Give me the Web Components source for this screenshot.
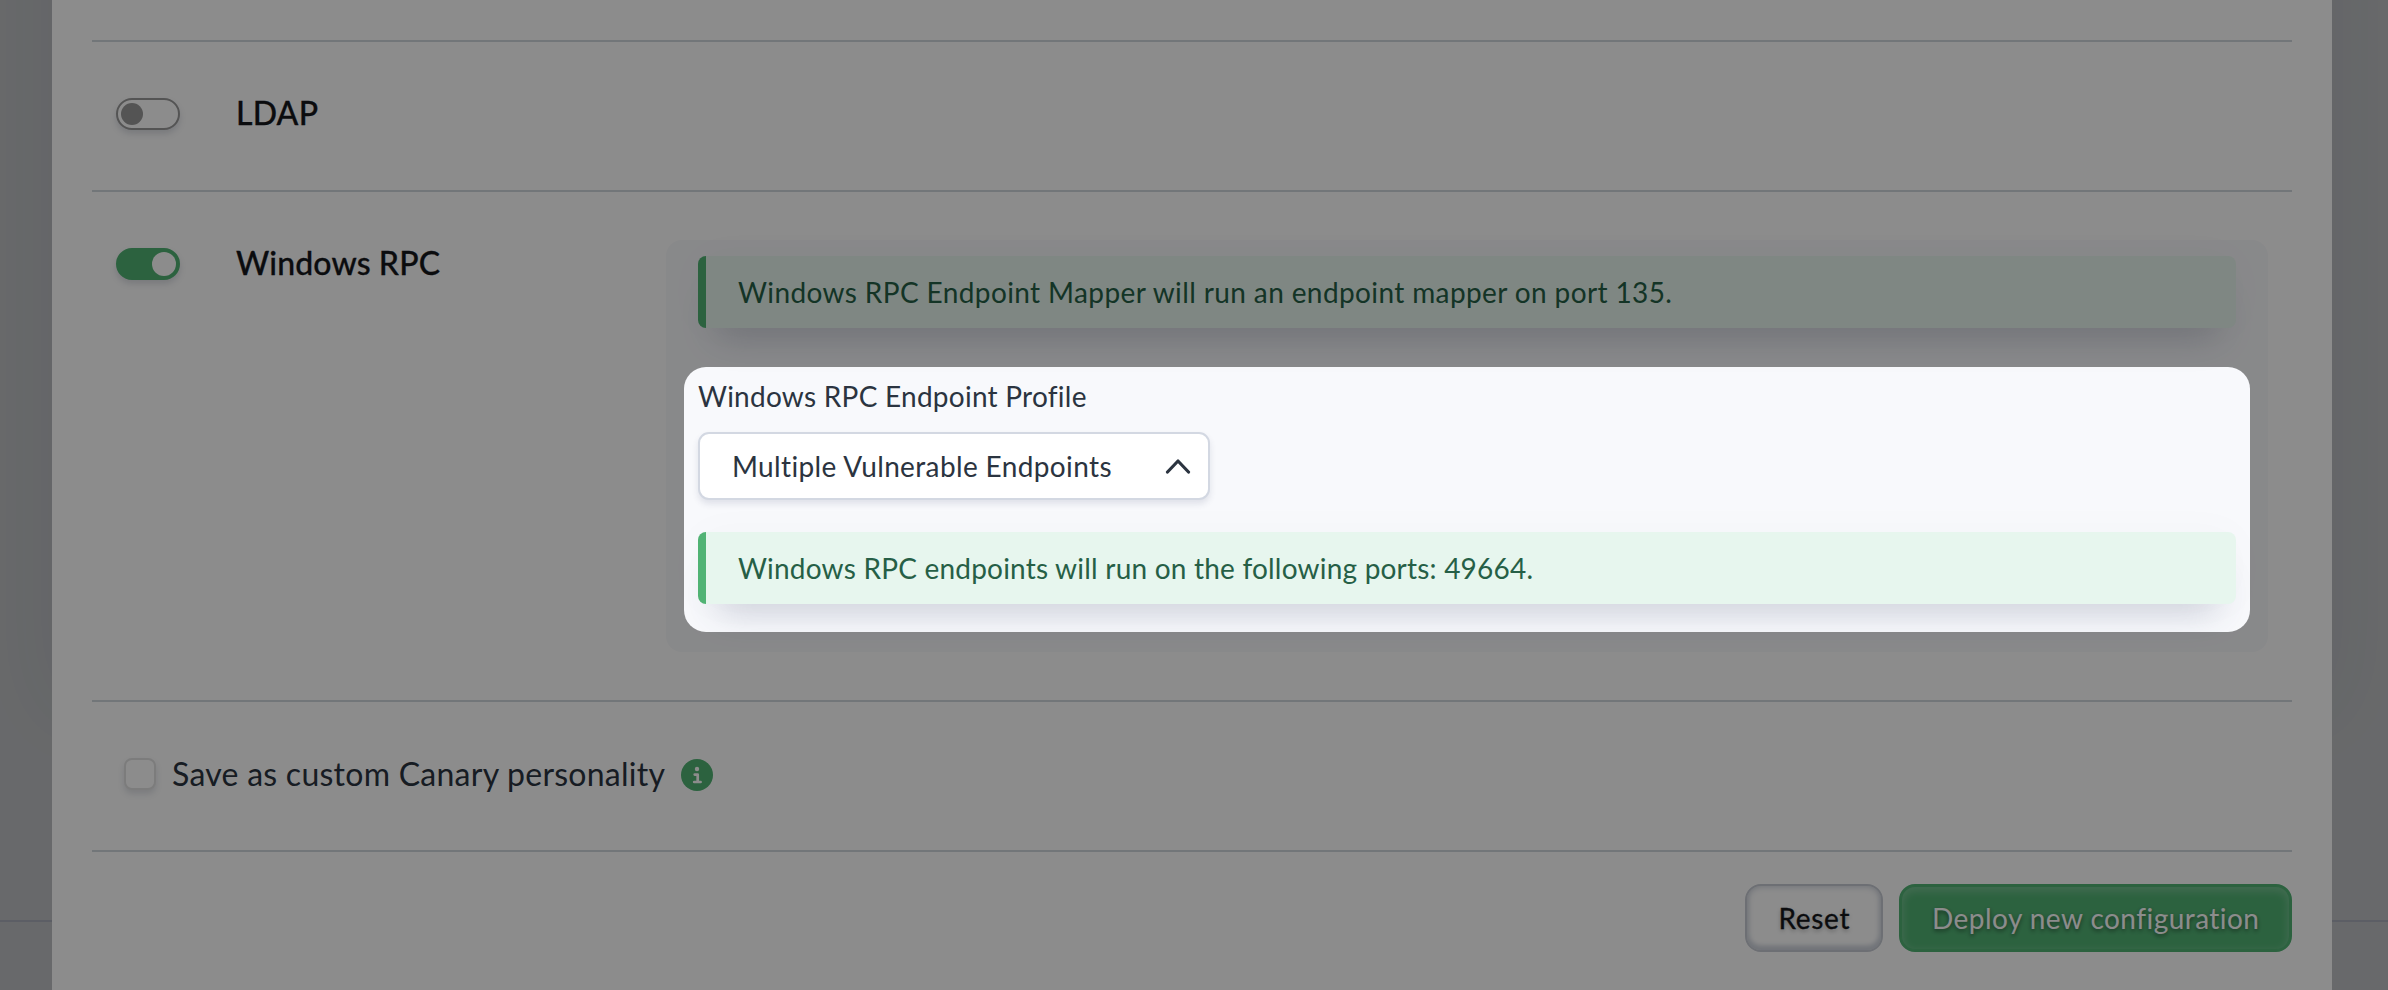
<!DOCTYPE html>
<html lang="en">
<head>
<meta charset="utf-8">
<title>Canary configuration</title>
<style>
  body {
    margin: 0;
    height: 990px;
    overflow: hidden;
    font-family: Lato, "Open Sans", sans-serif;
    color: #2b3440;
  }
</style>
</head>
<body>
<config-page>
  <service-row label="LDAP"></service-row>
  <service-row label="Windows RPC" width="204" on>
    <settings-box>
      <info-alert><fit-text width="934">Windows RPC Endpoint Mapper will run an endpoint mapper on port 135.</fit-text></info-alert>
      <profile-select label="Windows RPC Endpoint Profile" value="Multiple Vulnerable Endpoints"></profile-select>
      <info-alert><fit-text width="795">Windows RPC endpoints will run on the following ports: 49664.</fit-text></info-alert>
    </settings-box>
  </service-row>
  <save-row><fit-text width="493">Save as custom Canary personality</fit-text></save-row>
  <action-bar>
    <action-button><fit-text width="71">Reset</fit-text></action-button>
    <action-button primary><fit-text width="327">Deploy new configuration</fit-text></action-button>
  </action-bar>
</config-page>

<script>
class BaseElement extends HTMLElement {
  render(html) {
    this.attachShadow({mode: 'open'});
    const template = document.createElement('template');
    template.innerHTML = html;
    this.shadowRoot.appendChild(template.content.cloneNode(true));
  }
}

class ToggleSwitch extends BaseElement {
  constructor() {
    super();
    this.render(`
      <style>
        :host {
          display: flex;
          align-items: center;
          box-sizing: border-box;
          width: 64px;
          height: 32px;
          padding: 0 3px;
          border: 2px solid #9a9a9a;
          border-radius: 16px;
          background: #fff;
          box-shadow: 0 4px 6px rgba(50, 60, 90, .17);
        }
        i { width: 22px; height: 22px; border-radius: 50%; background: #9a9a9a; }
        :host([on]) {
          justify-content: flex-end;
          padding: 0 2px;
          border-color: #51b374;
          background: #51b374;
        }
        :host([on]) i { width: 24px; height: 24px; background: #fff; }
      </style>
      <i></i>
    `);
  }
}

class ServiceRow extends BaseElement {
  connectedCallback() {
    this.render(`
      <style>
        :host {
          display: grid;
          grid-template-columns: 120px 430px 1602px;
          align-items: start;
          box-sizing: border-box;
          min-height: 150px;
          padding: 48px 24px;
          border-top: 2px solid #cfd7dd;
        }
        toggle-switch { margin-top: 8px; }
        .name {
          font-size: 32px;
          line-height: 46px;
          font-weight: 500;
          color: #14161b;
          -webkit-text-stroke: .3px #14161b;
        }
      </style>
      <toggle-switch ${this.hasAttribute('on') ? 'on' : ''}></toggle-switch>
      <div class="name"><fit-text width="${this.getAttribute('width') || 82}">${this.getAttribute('label')}</fit-text></div>
      <slot></slot>
    `);
  }
}

class SettingsBox extends BaseElement {
  constructor() {
    super();
    this.render(`
      <style>
        :host {
          display: block;
          box-sizing: border-box;
          height: 412px;
          padding: 16px 32px;
          border-radius: 16px;
          background: #f8f9fc;
        }
      </style>
      <slot></slot>
    `);
  }
}

class InfoAlert extends BaseElement {
  constructor() {
    super();
    this.render(`
      <style>
        :host {
          display: block;
          box-sizing: border-box;
          height: 72px;
          padding-left: 32px;
          border-left: 8px solid #51b374;
          border-radius: 8px;
          background: #e7f6ee;
          color: #265f46;
          font-size: 28px;
          line-height: 72px;
          box-shadow: 0 26px 36px -20px rgba(50, 60, 100, .26), 0 0 44px rgba(50, 60, 100, .025);
        }
      </style>
      <slot></slot>
    `);
  }
}

class ProfileSelect extends BaseElement {
  connectedCallback() {
    this.render(`
      <style>
        :host {
          display: flex;
          flex-direction: column;
          align-items: flex-start;
          box-sizing: border-box;
          height: 204px;
          padding-top: 48px;
          font-size: 28px;
        }
        label { line-height: 40px; margin-bottom: 16px; }
        .select {
          display: flex;
          align-items: center;
          justify-content: space-between;
          box-sizing: border-box;
          width: 512px;
          height: 68px;
          padding: 0 17px 0 32px;
          border: 2px solid #d3d8e2;
          border-radius: 11px;
          background: #fff;
          box-shadow: 0 4px 6px rgba(50, 60, 100, .12);
        }
        svg { display: block; width: 26px; height: 16px; }
      </style>
      <label><fit-text width="388">${this.getAttribute('label')}</fit-text></label>
      <div class="select">
        <fit-text width="380">${this.getAttribute('value')}</fit-text>
        <svg viewBox="0 0 26 16" fill="none" stroke="#2b3440" stroke-width="3.2" stroke-linecap="round" stroke-linejoin="round"><path d="M2.5 14 13 3l10.5 11"/></svg>
      </div>
    `);
  }
}

class SaveRow extends BaseElement {
  constructor() {
    super();
    this.render(`
      <style>
        :host {
          display: flex;
          align-items: center;
          box-sizing: border-box;
          height: 150px;
          padding: 0 32px 4px;
          border-top: 2px solid #cfd7dd;
          font-size: 32px;
        }
        .check {
          box-sizing: border-box;
          width: 32px;
          height: 32px;
          margin-right: 16px;
          border: 2px solid #e2e2e2;
          border-radius: 8px;
          background: #fff;
          box-shadow: 0 4px 6px rgba(50, 60, 90, .15);
        }
        ::slotted(fit-text) { margin-bottom: 2px; }
        svg { width: 32px; height: 32px; margin: 2px 0 0 16px; }
      </style>
      <div class="check"></div>
      <slot></slot>
      <svg viewBox="0 0 32 32"><circle cx="16" cy="16" r="16" fill="#51b374"/><circle cx="16" cy="10" r="2.2" fill="#fff"/><path d="M13.7 15.6h3v7M13.2 23h6.4" fill="none" stroke="#fff" stroke-width="2.7" stroke-linecap="round" stroke-linejoin="round"/></svg>
    `);
  }
}

class ActionBar extends BaseElement {
  constructor() {
    super();
    this.render(`
      <style>
        :host {
          display: flex;
          justify-content: flex-end;
          gap: 16px;
          padding-top: 32px;
          border-top: 2px solid #cfd7dd;
        }
      </style>
      <slot></slot>
    `);
  }
}

class ActionButton extends BaseElement {
  constructor() {
    super();
    this.render(`
      <style>
        :host {
          display: flex;
          align-items: center;
          justify-content: center;
          box-sizing: border-box;
          width: 138px;
          height: 68px;
          border: 2px solid #c6cbd3;
          border-radius: 16px;
          background: #fff;
          color: #14161b;
          font-size: 28px;
          text-shadow: 0 2px 4px rgba(0, 0, 0, .3);
          -webkit-text-stroke: .3px currentColor;
          box-shadow: inset 0 -4px 5px #ced3dc, inset 0 0 6px 1px #ced3dc;
        }
        :host([primary]) {
          width: 393px;
          border-color: #51b374;
          background: #51b374;
          color: #fff;
          text-shadow: 0 2px 4px rgba(0, 0, 0, .5);
          box-shadow: inset 0 0 0 1px #51b374, inset 0 3px 7px 3px rgba(255, 255, 255, .2);
          -webkit-text-stroke: 0;
        }
      </style>
      <slot></slot>
    `);
  }
}

class ConfigPage extends BaseElement {
  constructor() {
    super();
    this.render(`
      <style>
        :host {
          display: block;
          position: relative;
          box-sizing: border-box;
          height: 990px;
          padding: 0 56px 0 52px;
          overflow: hidden;
          background: linear-gradient(#bec0c3 920px, #a8abb9 920px, #a8abb9 922px, #bec0c3 922px);
        }
        main {
          box-sizing: border-box;
          height: 990px;
          padding: 40px 40px 0;
          background: #fff;
          box-shadow: 0 -280px 80px rgba(40, 40, 60, .06);
        }
        /* everything but the highlighted area is dimmed */
        .spotlight {
          position: absolute;
          left: 684px;
          top: 367px;
          width: 1565.5px;
          height: 264.5px;
          border-radius: 22px;
          box-shadow: 0 0 0 2400px rgba(0, 0, 0, .45);
        }
      </style>
      <main><slot></slot></main>
      <div class="spotlight"></div>
    `);
  }
}

// Single line of text tracked out to the given width
class FitText extends BaseElement {
  constructor() {
    super();
    this.render(`
      <style>
        :host { display: inline-block; white-space: nowrap; }
        span { display: inline-block; }
      </style>
      <span><slot></slot></span>
    `);
  }

  connectedCallback() {
    const width = parseFloat(this.getAttribute('width'));
    if (!width) return;
    const span = this.shadowRoot.querySelector('span');
    const count = this.textContent.length;
    const gap = (width - span.getBoundingClientRect().width) / (count - 1);
    this.style.width = width + 'px';
    span.style.letterSpacing = gap.toFixed(3) + 'px';
  }
}

customElements.define('toggle-switch', ToggleSwitch);
customElements.define('service-row', ServiceRow);
customElements.define('settings-box', SettingsBox);
customElements.define('info-alert', InfoAlert);
customElements.define('profile-select', ProfileSelect);
customElements.define('save-row', SaveRow);
customElements.define('action-bar', ActionBar);
customElements.define('action-button', ActionButton);
customElements.define('config-page', ConfigPage);
// last, so the font sizes set by its parents are in place when it measures
customElements.define('fit-text', FitText);
</script>
</body>
</html>
